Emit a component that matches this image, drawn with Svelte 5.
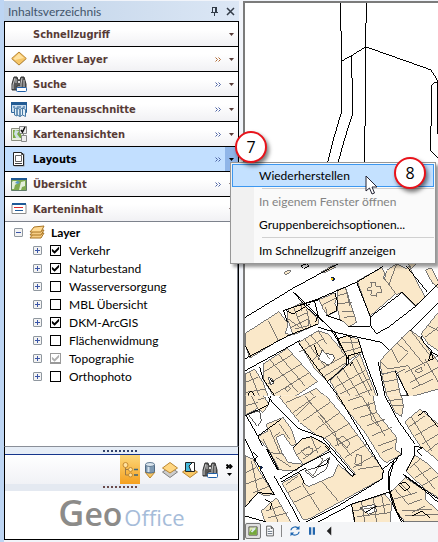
<script>
	let sections = $state([
		{ name: 'Schnellzugriff', icon: '', more: false },
		{ name: 'Aktiver Layer', icon: 'diamond', more: true },
		{ name: 'Suche', icon: 'binoculars', more: true, },
		{ name: 'Kartenausschnitte', icon: 'extract', more: true },
		{ name: 'Kartenansichten', icon: 'views', more: true },
		{ name: 'Layouts', icon: 'layout', more: true },
		{ name: 'Übersicht', icon: 'overview', more: true },
		{ name: 'Karteninhalt', icon: 'content', more: false }
	])
	let active = $state('Layouts')

	let layers = $state([
		{ name: 'Verkehr', on: true },
		{ name: 'Naturbestand', on: true },
		{ name: 'Wasserversorgung', on: false },
		{ name: 'MBL Übersicht', on: false },
		{ name: 'DKM-ArcGIS', on: true },
		{ name: 'Flächenwidmung', on: false },
		{ name: 'Topographie', on: true, disabled: true },
		{ name: 'Orthophoto', on: false }
	])

	const tools = [
		{ name: 'Karteninhalt', icon: 'tree' },
		{ name: 'Datenbank', icon: 'database' },
		{ name: 'Layer', icon: 'stack' },
		{ name: 'Ausschnitt', icon: 'clip' },
		{ name: 'Suche', icon: 'binoculars' }
	]
	let tool = $state('tree')
	let view = $state('map')

	const upper = [
		'22,233 123,168 150,205 142,232 158,238 122,254 35,308 22,268',
		'150,162 190,142 240,190 240,205 165,238 148,190',
		'243,132 290,112 295,130 290,145 300,165 268,180 255,160',
		'297,103 322,96 355,200 333,213 305,190 298,160',
		'357,76 432,36 440,50 436,68 475,112 395,182',
		'438,68 445,45 475,25 505,40 512,32 560,125 530,152 490,110 475,118',
		'562,42 580,38 600,78 600,98 585,85',
		'182,260 240,225 270,235 325,300 325,325 268,378 230,340',
		'297,250 325,240 360,250 372,288 335,312 312,290',
		'75,325 148,278 238,378 150,435 115,435 75,370',
		'275,375 365,295 420,435 310,435',
		'425,315 515,222 545,245 600,320 600,400 510,425 475,347 430,355',
		'430,357 472,345 490,435 450,435',
		'600,170 548,235 570,265 600,285',
		'22,355 50,340 75,380 95,435 22,435',
		'165,432 235,398 275,435 165,435',
		'138,50 157,43 157,50 142,57',
		'248,50 288,28 292,36 262,50',
		'510,25 535,25 520,40'
	]
	const lower = [
		'22,-10 70,-10 92,25 75,50 58,38 22,58',
		'125,5 130,-10 255,-10 330,80 435,222 432,248 215,368 196,372 132,262 185,232 200,265 212,272 285,240 300,205 340,240 352,235 265,130 235,118 185,80',
		'165,155 190,130 220,122 260,145 275,160 235,185 195,205 175,178',
		'60,122 90,105 85,85 135,65 160,100 175,145 160,150 135,115 115,125 135,175 150,200 195,205 175,225 125,222 90,158',
		'285,-10 402,-10 415,50 475,125 470,160 490,175 445,200 430,190 380,110',
		'443,-10 488,-10 495,30 490,62 470,50',
		'500,78 545,40 600,85 600,195 570,170 545,150 525,120',
		'503,225 530,178 570,205 600,235 600,305 560,280',
		'455,290 500,245 560,285 560,310 600,345 600,378 500,378 470,340',
		'340,325 440,295 460,320 455,390 350,390',
		'22,180 45,190 60,220 108,295 80,300 60,290 25,330 22,330',
		'70,345 115,305 165,390 85,390'
	]
	const upperLots =
		'M92,196L120,255M150,190L185,215M165,150L178,185L210,170M178,185L195,222M205,160L218,215M190,142V165M160,215L210,190V210L170,220M250,150L292,128M268,180L262,155M300,120L328,112M300,145L340,140M310,168H345M318,185L350,182M322,96L335,150M388,96L400,94L398,80L412,82V92H425L432,110L415,112V122L398,118L400,105H388ZM438,68L475,118M475,25L452,88M200,250L262,335M218,238L275,310M182,290L255,250M215,320L240,300M240,345L320,300M258,362L322,322M240,225L265,265M310,262L358,262M312,290L368,275M335,240L350,300M95,312L180,410M120,295L200,390M75,350L165,295M90,385L190,325M110,415L215,350M140,400L150,390L158,398L148,408ZM295,360L345,435M315,340L375,435M340,318L405,435M290,395L380,345M305,415L392,370M340,425L402,400M355,310L400,405M460,280L480,320L510,290L475,262M490,245L560,330M515,222L575,300M425,315L450,340L510,330L545,390M500,350L600,300M480,350L500,340M515,380L600,335M520,400L585,370M530,345L548,335L552,345L540,352ZM560,310L600,380M570,210L600,225M560,245L600,215M430,380L480,370M440,410L485,400M22,380L60,365M35,350L70,435M22,410L85,400M185,420L210,435M215,408L240,435'
	const lowerLots =
		'M40,0L60,40M60,12L85,5M22,30L60,20M145,20L190,0M165,50L235,0M195,75L275,20M235,100L305,50M262,125L335,82M290,150L360,115M320,185L385,145M345,215L405,180M175,60L215,20L260,70M200,0L290,110L300,150M300,130L315,120L335,140L325,155ZM240,60L340,180M355,175L370,180V210L350,205ZM360,220L425,210M145,265L180,240M150,290L190,270M190,260L245,345M250,255L300,315M165,320L230,290M330,15L375,0M345,40L410,20M365,65L415,50M385,90L440,70M400,120L460,95M420,150L475,130M370,0L440,120M390,20L400,70L420,90M430,170L465,155M175,178L215,150M195,190L250,150M190,165L205,155L225,158L220,175L200,178ZM220,122L240,170M75,130L95,170L135,175M95,100L125,170M105,125L125,110M125,85L155,130M115,185L160,215M450,15L490,10M455,30L495,28M510,95L560,60M530,120L590,85M550,145L600,115M520,65L580,165M570,165L600,140M525,200L590,280M515,215L545,190M530,245L580,215M550,270L600,240M470,280L510,325L550,310M465,310L535,290M490,345L580,340M500,360L600,355M485,260L520,295M520,350L560,330M370,318L380,378M405,305L415,378M345,345L455,325M355,362L455,350M430,298L440,350M40,195L60,290M22,230L55,215M22,265L75,245M45,290L95,270M85,345L130,330M90,365L150,350M100,325L120,378M200,215L225,240L255,190L240,180'
</script>

{#snippet icon(name)}
	<svg class="icon" viewBox="0 0 16 16" width="16" height="16" aria-hidden="true">
		{#if name == 'diamond'}
			<path d="M8 2.5 15 8.5 8 14.5 1 8.5Z" fill="#b9b9b9" />
			<path d="M8 1 15.3 7.5 8 14 .7 7.5Z" fill="#f6c668" stroke="#b98632" />
			<path d="M8 2.5 13 7 4 9 2.5 7.5Z" fill="#ffe2a0" />
		{:else if name == 'binoculars'}
			<path d="M3 1h3l1 3h2l1-3h3l2 7v6h-5v-4H6v4H1V8Z" fill="#555" stroke="#333" />
			<path d="M4 2 2 9v4M11 2l-1 6v5M5 3v4M13 4v7" stroke="#c8c8c8" fill="none" />
			<path d="M7 5h2v2H7Z" fill="#ddd" />
			<rect x="5.500" y="11.500" width="10" height="4" rx="1" fill="#fff" stroke="#1e5fa8" />
		{:else if name == 'extract'}
			<path d="M.5 1.500h15v10H.5Z" fill="#c8dced" stroke="#2d669d" />
			<path d="M0 1h16v3H0Z" fill="#225b94" />
			<path d="M2 6h2M6 6h4M12 6h2" stroke="#225b94" />
			<path d="M3.500 7.500 6 7v8l-2.500-1ZM6 7l3 1.500v7L6 14ZM9 8.500 11.500 7v7L9 15.500ZM11.500 7l3 1.500v7l-3-1.500Z" fill="#e3eff7" stroke="#4779a4" />
		{:else if name == 'views'}
			<path d="M.5 2.500h12v12H.5Z" fill="#e9efdf" stroke="#8b8f80" />
			<path d="M2 4h8v8H2Z" fill="#79aa41" />
			<path d="M4 4l4 1-2 3 3 4H5L3 8Z" fill="#cfe0e4" />
			<path d="M8.500.5h7v7h-7ZM10.500 9.500h5v6h-5Z" fill="#eee" stroke="#888" />
			<path d="m10 4 1.500 2L14 1" fill="none" stroke="#111" stroke-width="1.500" />
		{:else if name == 'layout'}
			<path d="M3.500 2.500h10v13h-10Z" fill="#999" />
			<path d="M2.500 1.500h8l2 2v11h-10Z" fill="#fff" stroke="#222" />
			<path d="M4.500 4.500h6v6h-6Z" fill="#fff" stroke="#666" />
			<path d="M4 12.500h7M10.500 1.500v2h2" stroke="#444" fill="none" />
		{:else if name == 'overview'}
			<path d="M.5 2.500h15v12H.5Z" fill="#7faa51" stroke="#607b68" />
			<path d="M0 2h16v2H0Z" fill="#1d5792" />
			<path d="M2 5h4l1 2-3 2-1 4H1V6ZM10 6l4-1v5l-3 1-1 3H8l1-4Z" fill="#e3efda" />
			<path d="m6 5 3 1-2 2-3-1Z" fill="#5b9bc6" />
		{:else if name == 'content'}
			<path d="M1 3.500h14v9H1Z" fill="#fff" stroke="#8b8b8b" />
			<path d="M1 3h14" stroke="#1f5a97" stroke-width="2" />
			<path d="M3 6.500h9" stroke="#d92a2a" />
			<path d="M4 9.500h8" stroke="#1f5a97" />
		{:else if name == 'layers'}
			<path d="m4 10 11-1-3 5H1Z" fill="#f7cd83" stroke="#a87423" />
			<path d="m4 7 11-1-3 5H1Z" fill="#f7cd83" stroke="#a87423" />
			<path d="m5 3 10-1-3 6H1Z" fill="#ffd991" stroke="#a87423" />
		{:else if name == 'tree'}
			<path d="M3.500 4v9H8M3.500 7.500H8" stroke="#9b7a49" fill="none" />
			<circle cx="3.500" cy="3" r="2.500" fill="#ffe2a0" stroke="#c48a32" />
			<circle cx="8.500" cy="7.500" r="2" fill="#ffe2a0" stroke="#c48a32" />
			<circle cx="8.500" cy="13" r="2" fill="#ffe2a0" stroke="#c48a32" />
			<path d="M12 7.500h4M12 13h4" stroke="#3d637a" stroke-width="1.500" />
		{:else if name == 'database'}
			<path d="m3 10 5-3 5 3-5 6Z" fill="#f8c765" stroke="#b98632" />
			<path d="M3.500 2.500v7c0 2 9 2 9 0v-7" fill="#7e99b2" stroke="#526b84" />
			<path d="M5.500 4v6h2V4Z" fill="#d6e3ee" />
			<ellipse cx="8" cy="2.500" rx="4.500" ry="2" fill="#dae5ee" stroke="#627b94" />
		{:else if name == 'stack'}
			<path d="m8 5 7.500 5L8 15.500.5 10Z" fill="#ccc" stroke="#808080" />
			<path d="m8 .5 7.500 5.500L8 11 .5 6Z" fill="#ffd681" stroke="#b98632" />
		{:else if name == 'clip'}
			<path d="m8 5 7.500 5L8 15.500.5 10Z" fill="#f8c765" stroke="#b98632" />
			<path d="M3.500.5h9v9h-9Z" fill="#fff" stroke="#222" />
			<path d="M4 1h6L7 4l2 5H4Z" fill="#45b9dc" />
			<path d="M10 1 7 4l2 5" stroke="#222" fill="none" />
		{:else if name == 'map'}
			<path d="M2.500 2.500h11v11h-11Z" fill="#dfeab7" stroke="#333" />
			<path d="m3 10 3-4 2 2 5-5v10H3Z" fill="#75a83b" />
			<path d="m8 5 3-2v3l-4 4-2-1Z" fill="#d8e7ed" />
		{:else if name == 'page'}
			<path d="M3.500 1.500h6l3 3v10h-9Z" fill="#fff" stroke="#333" />
			<path d="M5 5.500h3M5 8.500h6M5 11.500h6" stroke="#345" />
			<path d="M9 2v3h3Z" fill="#333" />
		{:else if name == 'refresh'}
			<path d="M2.500 7c1-5 8-6 10-2M13.500 9c-1 5-8 6-10 2" fill="none" stroke="#1f67b1" stroke-width="1.500" />
			<path d="M14 1v5H9ZM2 15v-5h5Z" fill="#1f67b1" />
		{:else if name == 'pause'}
			<path d="M4 3h3v10H4ZM9 3h3v10H9Z" fill="#2467ae" />
		{:else if name == 'back'}
			<path d="M11 2v12L5 8Z" fill="#222" />
		{/if}
	</svg>
{/snippet}

{#snippet chevrons()}
	<svg class="chevrons" viewBox="0 0 7 5" width="7" height="5" aria-hidden="true"><path d="m.5.5 2 2-2 2M3.500.5l2 2-2 2" fill="none" stroke="currentColor" /></svg>
{/snippet}

{#snippet arrow()}
	<svg viewBox="0 0 5 3" width="5" height="3" aria-hidden="true"><path d="M0 0h5L2.500 3Z" fill="currentColor" /></svg>
{/snippet}

<main>
	<aside>
		<header>
			<h1>Inhaltsverzeichnis</h1>
			<button aria-label="Anheften">
				<svg viewBox="0 0 9 9" width="9" height="9"><path d="M2.500 0v5M2 .5h5M5.500 0v5M6.500 0v5M1 5.500h7M4.500 6v3" stroke="currentColor" fill="none" /></svg>
			</button>
			<button aria-label="Schließen">
				<svg viewBox="0 0 9 9" width="9" height="9"><path d="m1 1 7 7M8 1 1 8" stroke="currentColor" stroke-width="1.500" fill="none" /></svg>
			</button>
		</header>

		<ul class="sections">
			{#each sections as s}
				<li class:active={s.name == active}>
					<button class="title" onclick={() => (active = s.name)}>
						{@render icon(s.icon)}
						<span>{s.name}</span>
					</button>
					{#if s.more}
						<button class="more" class:warm={s.icon == 'diamond'} aria-label="Mehr">{@render chevrons()}</button>
					{/if}
					<button class="drop" aria-label="Menü">{@render arrow()}</button>
					{#if s.name == active}
						<div class="menu" role="menu">
							<button role="menuitem" class="current">Wiederherstellen</button>
							<hr />
							<button role="menuitem" disabled>In eigenem Fenster öffnen</button>
							<button role="menuitem">Gruppenbereichsoptionen...</button>
							<hr />
							<button role="menuitem">Im Schnellzugriff anzeigen</button>
							<svg class="pointer" viewBox="0 0 13 20" width="13" height="20" aria-hidden="true">
								<path d="M1 1v15l3.500-3 2.500 6 2.500-1-2.500-6H12Z" fill="#fff" stroke="#223" />
							</svg>
							<span class="callout eight">8</span>
						</div>
						<span class="callout seven">7</span>
					{/if}
				</li>
			{/each}
		</ul>

		<div class="tree">
			<div class="root">
				<button class="expand open" aria-label="Zuklappen"></button>
				{@render icon('layers')}
				<b>Layer</b>
			</div>
			<ul>
				{#each layers as layer}
					<li>
						<button class="expand" aria-label="Aufklappen"></button>
						<label>
							<input type="checkbox" bind:checked={layer.on} disabled={layer.disabled} />
							{layer.name}
						</label>
					</li>
				{/each}
			</ul>
		</div>

		<div class="grip"></div>
		<div class="tools">
			{#each tools as t}
				<button class:on={tool == t.icon} aria-label={t.name} onclick={() => (tool = t.icon)}>
					{@render icon(t.icon)}
				</button>
			{/each}
			<button class="rest" aria-label="Weitere">
				{@render chevrons()}
				{@render arrow()}
			</button>
		</div>
		<div class="grip low"></div>
		<div class="logo"><span class="g">G</span><span class="eo">eo</span><span class="office">Office</span></div>
	</aside>

	<section>
		<div class="canvas">
			<svg class="map" viewBox="0 0 579 1554" preserveAspectRatio="xMinYMin slice" role="img" aria-label="Karte">
				<clipPath id="upper"><rect x="0" y="0" width="2000" height="420" /></clipPath>
				<clipPath id="lower"><rect x="0" y="0" width="2000" height="2000" /></clipPath>
				<g class="road" transform="translate(-21 -9)">
					<path d="M307,9V93L310,95V335L285,420L250,560M385,9V65L382,70V375L379,380V560M312,182L340,167L382,140L577,209L597,240V400M340,167V233L343,236V342L318,420L280,560M597,246L588,247L580,256V375L577,378V450L600,475" />
				</g>
				<g transform="translate(-21 756)" clip-path="url(#upper)">
					{#each upper as points}
						<polygon class="parcel" {points} />
					{/each}
					<polygon class="yard" points="240,310 252,283 262,292 285,298 290,308 272,330" />
					<polygon class="yard" points="90,365 100,368 108,382 98,388" />
					<path class="lot" d={upperLots} />
					<path class="road" d="M22,185L165,98L355,-5L435,-50M22,185L165,98M165,155L243,132M165,108L205,155L275,215L325,300V330M172,115L290,230L330,310M136,165L240,130L355,80L435,32M228,133L240,180L232,200M136,165L148,200M140,162L165,175L215,145M265,180L310,195M290,112L298,140L295,165L268,180M240,215L290,230L345,242L430,260L452,282M355,80L397,185V210L415,234L450,215L532,152L600,85M330,213H395M395,185L490,112M490,108L532,150M515,225L600,140M505,30L570,110M22,309L150,240L240,205M22,345L185,255M22,270L40,305M65,335L75,370L120,435M268,378L330,325V300L372,288M335,330L345,318M297,250L327,240L342,248M360,250L375,300L425,435M240,300L228,268M420,318L440,420M470,345L510,420L485,418M548,240L555,260L585,292L600,300M570,315L578,290L585,310ZM190,30L205,25L212,32L198,38Z" />
					<path class="road" d="M30,415L40,405L50,420L38,430ZM95,370L108,380M182,262L310,435" />
					<circle cx="284" cy="70" r="6" class="spot" />
					<path d="M278,66h5v7h-5Z" fill="#fc0" />
				</g>
				<g transform="translate(-21 1176)" clip-path="url(#lower)">
					{#each lower as points}
						<polygon class="parcel" {points} />
					{/each}
					<polygon class="yard" points="200,225 235,215 265,190 275,185 265,220 225,245" />
					<polygon class="yard" points="365,335 410,325 415,345 390,355" />
					<polygon class="yard" points="30,55 65,45 70,75 58,92" />
					<path class="lot" d={lowerLots} />
					<path class="road" d="M22,60L90,28L98,0M25,60L60,122L75,150M90,5L180,98L255,125L350,236L342,242L260,150M60,120L130,70M22,130L50,190L108,295M88,158L122,222M85,160L118,222M108,240L165,340L185,378M125,250L200,205L280,165M130,258L205,215M165,155L190,130L220,122L262,145L275,160M185,232L200,265M300,0L435,225L432,248M440,0L480,75L530,145M430,222L490,175V155M480,185L465,205L455,240V285L475,345L495,378M470,188L452,225L450,275L465,330L490,378M505,225L528,180V152L555,155L535,165L550,178M205,378L300,330L430,250M240,378L340,325L440,292L460,285M340,325L350,378M495,235L600,310M600,320L560,285L500,240M540,60L560,45L600,95M22,332L60,290L110,295M22,360L85,378M480,265L500,258L515,275L500,285ZM520,360L550,345L575,365M380,350L415,330M232,215L265,205L270,190M45,170L58,180L50,195M80,310L100,320L98,340" />
					<circle cx="68" cy="215" r="6" class="spot" />
					<path d="M62,213h5v7h-5Z" fill="#fc0" />
				</g>
			</svg>
		</div>
		<footer>
			<button class:on={view == 'map'} aria-label="Datenansicht" onclick={() => (view = 'map')}>{@render icon('map')}</button>
			<button class:on={view == 'page'} aria-label="Layoutansicht" onclick={() => (view = 'page')}>{@render icon('page')}</button>
			<i></i>
			<button aria-label="Aktualisieren">{@render icon('refresh')}</button>
			<button aria-label="Pause">{@render icon('pause')}</button>
			<button aria-label="Nach links">{@render icon('back')}</button>
		</footer>
	</section>
</main>

<style>
:global(body)
{
	margin: 0;
	background: #eef2f8;
}
main
{
	display: grid;
	grid-template-columns: 235px 1fr;
	gap: 4px;
	min-height: 100vh;
	box-sizing: border-box;
	padding: 1px 0 2px 4px;
	background: linear-gradient(90deg, #bdd5f3 4px, #f1f4fa 4px);
	font-family: Lato, "Open Sans", sans-serif;
	font-size: 12px;
	color: #000;
}
button
{
	display: flex;
	align-items: center;
	justify-content: center;
	padding: 0;
	border: none;
	background: none;
	font: inherit;
	color: inherit;
}
ul
{
	margin: 0;
	padding: 0;
	list-style: none;
}
svg
{
	display: block;
	flex: none;
}
aside
{
	display: flex;
	flex-direction: column;
}
header
{
	display: flex;
	align-items: center;
	height: 20px;
	padding: 0 4px 0 4px;
	gap: 6px;
	background: linear-gradient(90deg, #bfd2e8, #dce7f5);
	color: #42546a;
}
header h1
{
	flex: 1;
	margin: 0;
	font-size: 12px;
	font-weight: 400;
}
header button
{
	width: 10px;
	height: 16px;
	color: #333c48;
}
.sections
{
	border: 1px solid #000;
	border-bottom: none;
}
.sections li
{
	position: relative;
	display: flex;
	height: 24px;
	border-bottom: 1px solid #000;
	background: linear-gradient(#fff 30%, #f1f1f4);
	color: #573b36;
}
.sections li:last-child
{
	border-bottom-color: #7d828c;
}
.sections li.active
{
	background: #c2dfff;
	color: #000;
}
.title
{
	flex: 1;
	justify-content: flex-start;
	gap: 6px;
	padding-left: 6px;
	font-family: "DejaVu Sans Condensed", "DejaVu Sans", sans-serif;
	font-size: 11px;
	font-weight: 700;
}
.more
{
	width: 14px;
	color: #4c62a4;
}
.more.warm
{
	color: #b06a35;
}
.drop
{
	width: 13px;
}
.active .drop
{
	background: #8fb5e8;
}
.menu
{
	position: absolute;
	z-index: 2;
	top: 15px;
	left: 225px;
	width: 206px;
	box-sizing: border-box;
	padding: 1px;
	border: 1px solid #979797;
	background: linear-gradient(90deg, #f1f1f1 23px, #fafafa 23px);
	box-shadow: 3px 3px 3px #0006;
}
.menu button
{
	width: 100%;
	height: 23px;
	justify-content: flex-start;
	padding-left: 26px;
	border: 1px solid transparent;
}
.menu button:disabled
{
	color: #838383;
}
.menu .current
{
	border-color: #3c97f0;
	background: #c4e1ff;
}
.menu hr
{
	height: 1px;
	margin: 1px 0 1px 30px;
	border: none;
	background: #d0d0d0;
}
.callout
{
	position: absolute;
	z-index: 3;
	width: 28px;
	border: 2px solid #e8131b;
	border-radius: 50%;
	background: #fff;
	box-shadow: 2px 3px 4px #0008;
	color: #000;
	font-family: "Open Sans", sans-serif;
	font-size: 16px;
	line-height: 28px;
	text-align: center;
}
.seven
{
	top: -16px;
	left: 230px;
}
.eight
{
	top: -6px;
	right: 9px;
}
.pointer
{
	position: absolute;
	z-index: 3;
	top: 12px;
	right: 57px;
}
.tree
{
	flex: 1;
	padding: 1px 0 1px 8px;
	border: solid #000;
	border-width: 0 1px;
	background: #fff;
	box-shadow: inset -1px 0 #7d828c;
}
.root, .tree li, .tree label
{
	display: flex;
	align-items: center;
	height: 18px;
}
.root
{
	gap: 6px;
	padding-left: 1px;
}
.root b
{
	font-size: 12px;
}
.tree li
{
	padding-left: 20px;
	gap: 8px;
}
.tree label
{
	gap: 8px;
}
.expand
{
	flex: none;
	width: 9px;
	height: 9px;
	border: 1px solid #8f979f;
	border-radius: 1px;
	background:
		linear-gradient(#3a55a8, #3a55a8) center / 5px 1px no-repeat,
		linear-gradient(#3a55a8, #3a55a8) center / 1px 5px no-repeat,
		#f3f3f3;
}
.expand.open
{
	background: linear-gradient(#3a55a8, #3a55a8) center / 5px 1px no-repeat, #f3f3f3;
}
input
{
	appearance: none;
	width: 11px;
	height: 11px;
	margin: 0;
	border: 1px solid #000;
	background: #fff;
}
input:checked::after
{
	content: "";
	display: block;
	width: 9px;
	height: 9px;
	background: #000;
	clip-path: polygon(10% 35%, 40% 62%, 90% 10%, 90% 42%, 40% 92%, 10% 65%);
}
input:disabled
{
	border-color: #999;
	border-bottom-width: 2px;
}
input:disabled::after
{
	background: #b0b0b0;
}
.grip
{
	height: 7px;
	border: solid #000;
	border-width: 0 1px;
	background:
		repeating-linear-gradient(90deg, #33436b 0 2px, transparent 2px 4px) 98px 3px / 34px 2px no-repeat,
		#e6edf6;
	border-top: 1px solid #8a8f98;
}
.grip.low
{
	border-top: none;
	background:
		repeating-linear-gradient(90deg, #6b4a4a 0 2px, transparent 2px 4px) 98px 2px / 34px 2px no-repeat,
		#e4e9f1;
}
.tools
{
	display: flex;
	justify-content: flex-end;
	height: 30px;
	border: solid #000;
	border-width: 0 1px;
	background: linear-gradient(#fff, #f1f2f6);
	box-shadow: inset 0 1px #15358c;
}
.tools button
{
	width: 20px;
	margin-top: 1px;
}
.tools .on
{
	background: linear-gradient(#fcd77a, #f5a01f);
}
.tools .rest
{
	flex-direction: column;
	gap: 4px;
	width: 18px;
}
.rest .chevrons
{
	stroke-width: 2px;
}
.logo
{
	display: flex;
	align-items: baseline;
	justify-content: center;
	border: 1px solid #000;
	border-top: none;
	background: #fff;
	font-family: "Open Sans", sans-serif;
	line-height: 44px;
	color: #8c8b89;
	font-weight: 600;
}
.g
{
	font-size: 36px;
}
.eo
{
	font-size: 32px;
}
.office
{
	margin-left: 2px;
	font-size: 22px;
	font-weight: 400;
	color: #a6bcd9;
}
section
{
	display: flex;
	flex-direction: column;
	min-width: 0;
	border: solid #7b7b7b;
	border-width: 2px 0 0 2px;
}
.canvas
{
	flex: 1;
	min-height: 0;
	overflow: hidden;
	background: #fff;
	contain: size;
}
.map
{
	width: 100%;
	height: 100%;
	shape-rendering: crispEdges;
}
.map *
{
	vector-effect: non-scaling-stroke;
}
.parcel
{
	fill: #fae8c9;
	stroke: #777;
}
.yard
{
	fill: #fff;
	stroke: #555;
}
.lot
{
	fill: none;
	stroke: #7c7770;
}
.road
{
	fill: none;
	stroke: #000;
}
.spot
{
	fill: #124;
}
footer
{
	display: flex;
	align-items: center;
	height: 18px;
	gap: 1px;
	background: #f4f5f7;
}
footer button
{
	width: 16px;
	height: 16px;
}
footer .icon
{
	width: 12px;
	height: 12px;
}
footer .on
{
	border: 1px solid #777;
	border-radius: 2px;
	background: #e0e0e0;
}
footer i
{
	width: 1px;
	height: 12px;
	margin: 0 4px 0 2px;
	background: #888;
}
</style>
